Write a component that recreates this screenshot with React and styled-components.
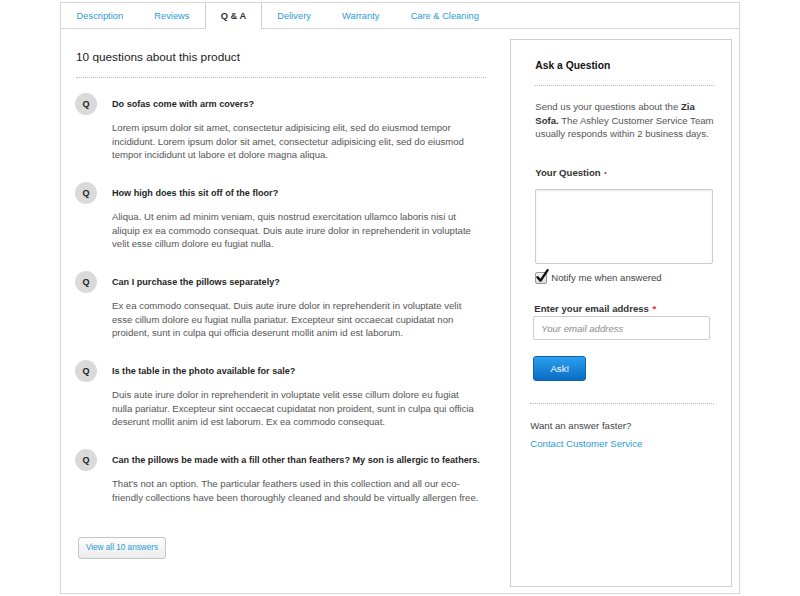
import React from "react";
import styled, { createGlobalStyle } from "styled-components";

const GlobalStyle = createGlobalStyle`
  body {
    margin: 0;
    background: #fff;
    font-family: "Liberation Sans", Arial, sans-serif;
  }
  * { box-sizing: border-box; }
`;

const tabs = ["Description", "Reviews", "Q & A", "Delivery", "Warranty", "Care & Cleaning"];

const questions = [
  {
    q: "Do sofas come with arm covers?",
    a: "Lorem ipsum dolor sit amet, consectetur adipisicing elit, sed do eiusmod tempor incididunt. Lorem ipsum dolor sit amet, consectetur adipisicing elit, sed do eiusmod tempor incididunt ut labore et dolore magna aliqua.",
  },
  {
    q: "How high does this sit off of the floor?",
    a: "Aliqua. Ut enim ad minim veniam, quis nostrud exercitation ullamco laboris nisi ut aliquip ex ea commodo consequat. Duis aute irure dolor in reprehenderit in voluptate velit esse cillum dolore eu fugiat nulla.",
  },
  {
    q: "Can I purchase the pillows separately?",
    a: "Ex ea commodo consequat. Duis aute irure dolor in reprehenderit in voluptate velit esse cillum dolore eu fugiat nulla pariatur. Excepteur sint occaecat cupidatat non proident, sunt in culpa qui officia deserunt mollit anim id est laborum.",
  },
  {
    q: "Is the table in the photo available for sale?",
    a: "Duis aute irure dolor in reprehenderit in voluptate velit esse cillum dolore eu fugiat nulla pariatur. Excepteur sint occaecat cupidatat non proident, sunt in culpa qui officia deserunt mollit anim id est laborum. Ex ea commodo consequat.",
  },
  {
    q: "Can the pillows be made with a fill other than feathers? My son is allergic to feathers.",
    a: "That's not an option. The particular feathers used in this collection and all our eco-friendly collections have been thoroughly cleaned and should be virtually allergen free.",
  },
];

function App() {
  return (
    <>
      <GlobalStyle />
      <Page>
        <TabBar>
          {tabs.map((t) => (
            <Tab key={t} $active={t === "Q & A"}>
              {t}
            </Tab>
          ))}
        </TabBar>
        <Content>
          <Main>
            <Heading>10 questions about this product</Heading>
            <QuestionList>
              {questions.map((item) => (
                <QuestionItem key={item.q}>
                  <QuestionRow>
                    <QBadge>Q</QBadge>
                    <QuestionText>{item.q}</QuestionText>
                  </QuestionRow>
                  <Answer>{item.a}</Answer>
                </QuestionItem>
              ))}
            </QuestionList>
            <ViewAllButton>View all 10 answers</ViewAllButton>
          </Main>
          <AskPanel>
            <PanelTitle>Ask a Question</PanelTitle>
            <Intro>
              Send us your questions about the <strong>Zia Sofa.</strong> The Ashley
              Customer Service Team usually responds within 2 business days.
            </Intro>
            <FieldLabel $top={25}>
              Your Question <Required $dot>•</Required>
            </FieldLabel>
            <QuestionBox />
            <CheckRow>
              <CheckBox>
                <svg width="14" height="15" viewBox="0 0 14 15">
                  <path
                    d="M2.5 8.2 L5.6 11.6 L12.6 1.2"
                    fill="none"
                    stroke="#111"
                    strokeWidth="2.4"
                    strokeLinecap="round"
                    strokeLinejoin="round"
                  />
                </svg>
              </CheckBox>
              Notify me when answered
            </CheckRow>
            <FieldLabel $top={17} $shift={-1}>
              Enter your email address <Required>*</Required>
            </FieldLabel>
            <EmailInput placeholder="Your email address" />
            <AskButton>Ask!</AskButton>
            <Faster>
              <p>Want an answer faster?</p>
              <ContactLink>Contact Customer Service</ContactLink>
            </Faster>
          </AskPanel>
        </Content>
      </Page>
    </>
  );
}

const Page = styled.div`
  margin: 2px 0 0 60px;
  width: 680px;
  height: 592px;
  border: 1px solid #d6d6d6;
  display: flex;
  flex-direction: column;
`;

const TabBar = styled.div`
  display: flex;
  align-items: flex-start;
  height: 26px;
  border-bottom: 1px solid #d6d6d6;
`;

const Tab = styled.div`
  height: ${(p) => (p.$active ? "26px" : "25px")};
  padding: 0 14.6px;
  display: flex;
  align-items: center;
  padding-bottom: ${(p) => (p.$active ? "1px" : "0")};
  font-size: 9.3px;
  color: ${(p) => (p.$active ? "#333" : "#2a9bd7")};
  font-weight: ${(p) => (p.$active ? "bold" : "normal")};
  background: #fff;
  border-left: 1px solid ${(p) => (p.$active ? "#d0d0d0" : "transparent")};
  border-right: 1px solid ${(p) => (p.$active ? "#d0d0d0" : "transparent")};
  position: relative;
  z-index: 1;
`;

const Content = styled.div`
  flex: 1;
  display: flex;
  gap: 24px;
  padding: 10px 7px 6px 15px;
`;

const Main = styled.div`
  width: 411px;
  display: flex;
  flex-direction: column;
  align-items: flex-start;
`;

const Heading = styled.h2`
  align-self: stretch;
  margin: 10px 0 0;
  padding-bottom: 12px;
  font-size: 11.8px;
  line-height: 16px;
  font-weight: normal;
  color: #222;
  border-bottom: 1px dotted #b5b5b5;
`;

const QuestionList = styled.div`
  margin-top: 15px;
  display: flex;
  flex-direction: column;
`;

const QuestionItem = styled.div`
  padding-bottom: 20.5px;
`;

const QuestionRow = styled.div`
  display: flex;
  align-items: center;
  gap: 15px;
`;

const QBadge = styled.span`
  flex: none;
  width: 22px;
  height: 22px;
  margin-left: -1px;
  border-radius: 50%;
  background: #dadada;
  display: flex;
  align-items: center;
  justify-content: center;
  font-size: 9px;
  font-weight: bold;
  color: #222;
`;

const QuestionText = styled.span`
  font-size: 9.1px;
  font-weight: bold;
  color: #262626;
`;

const Answer = styled.p`
  margin: 6px 0 0 36px;
  font-size: 9.6px;
  line-height: 13.5px;
  color: #555;
  max-width: 367.5px;
`;

const ViewAllButton = styled.button`
  margin: 12px 0 0 2px;
  width: 88px;
  height: 22px;
  padding: 0;
  border: 1px solid #c4c4c4;
  border-radius: 3px;
  background: linear-gradient(#fdfdfd, #ececec);
  color: #2a9bd7;
  font-family: inherit;
  font-size: 8.2px;
`;

const AskPanel = styled.aside`
  width: 222px;
  border: 1px solid #cfcfcf;
  padding: 19px 17px 0 24px;
  display: flex;
  flex-direction: column;
  align-items: flex-start;
`;

const PanelTitle = styled.h3`
  align-self: stretch;
  margin: 0;
  padding-bottom: 12px;
  font-size: 10.3px;
  line-height: 14px;
  color: #111;
  border-bottom: 1px dotted #b5b5b5;
`;

const Intro = styled.p`
  margin: 14px 0 0;
  font-size: 9.6px;
  line-height: 13.5px;
  color: #555;

  strong {
    color: #333;
  }
`;

const FieldLabel = styled.label`
  margin: ${(p) => p.$top}px 0 0 ${(p) => p.$shift || 0}px;
  font-size: 9.6px;
  line-height: 13px;
  font-weight: bold;
  color: #333;
`;

const Required = styled.span`
  color: #e0302a;
  font-size: ${(p) => (p.$dot ? "7px" : "9.6px")};
  margin-left: 1px;
  vertical-align: ${(p) => (p.$dot ? "1px" : "0")};
`;

const QuestionBox = styled.textarea`
  margin-top: 10px;
  width: 178px;
  height: 75px;
  border: 1px solid #cdcdcd;
  border-radius: 2px;
  box-shadow: inset 0 1px 2px rgba(0, 0, 0, 0.1);
  resize: none;
`;

const CheckRow = styled.div`
  margin-top: 7px;
  display: flex;
  align-items: center;
  gap: 4px;
  font-size: 9.6px;
  line-height: 14px;
  color: #444;
`;

const CheckBox = styled.span`
  position: relative;
  width: 12px;
  height: 12px;
  border: 1px solid #9a9a9a;
  border-radius: 2px;
  background: linear-gradient(#f4f4f4, #dcdcdc);

  svg {
    position: absolute;
    left: -1px;
    top: -4px;
  }
`;

const EmailInput = styled.input`
  margin: 1.5px 0 0 -2px;
  width: 177px;
  height: 24px;
  padding: 0 7px;
  border: 1px solid #cdcdcd;
  border-radius: 2px;
  font-family: inherit;
  font-size: 9.6px;
  outline: none;

  &::placeholder {
    font-style: italic;
    color: #8a8a8a;
  }
`;

const AskButton = styled.button`
  margin: 16px 0 0 -2px;
  width: 53px;
  height: 25px;
  padding: 0;
  border: 1px solid #0b63b0;
  border-radius: 3px;
  background: linear-gradient(#2ba0ee, #0a6cc4);
  color: #fff;
  font-family: inherit;
  font-size: 9.6px;
`;

const Faster = styled.div`
  margin: 22px 0 0 -5px;
  align-self: stretch;
  padding-top: 13px;
  border-top: 1px dotted #b5b5b5;
  font-size: 9.6px;
  line-height: 18px;

  p {
    margin: 0;
    color: #444;
  }
`;

const ContactLink = styled.a`
  color: #2a9bd7;
  cursor: pointer;
`;

export default App;
